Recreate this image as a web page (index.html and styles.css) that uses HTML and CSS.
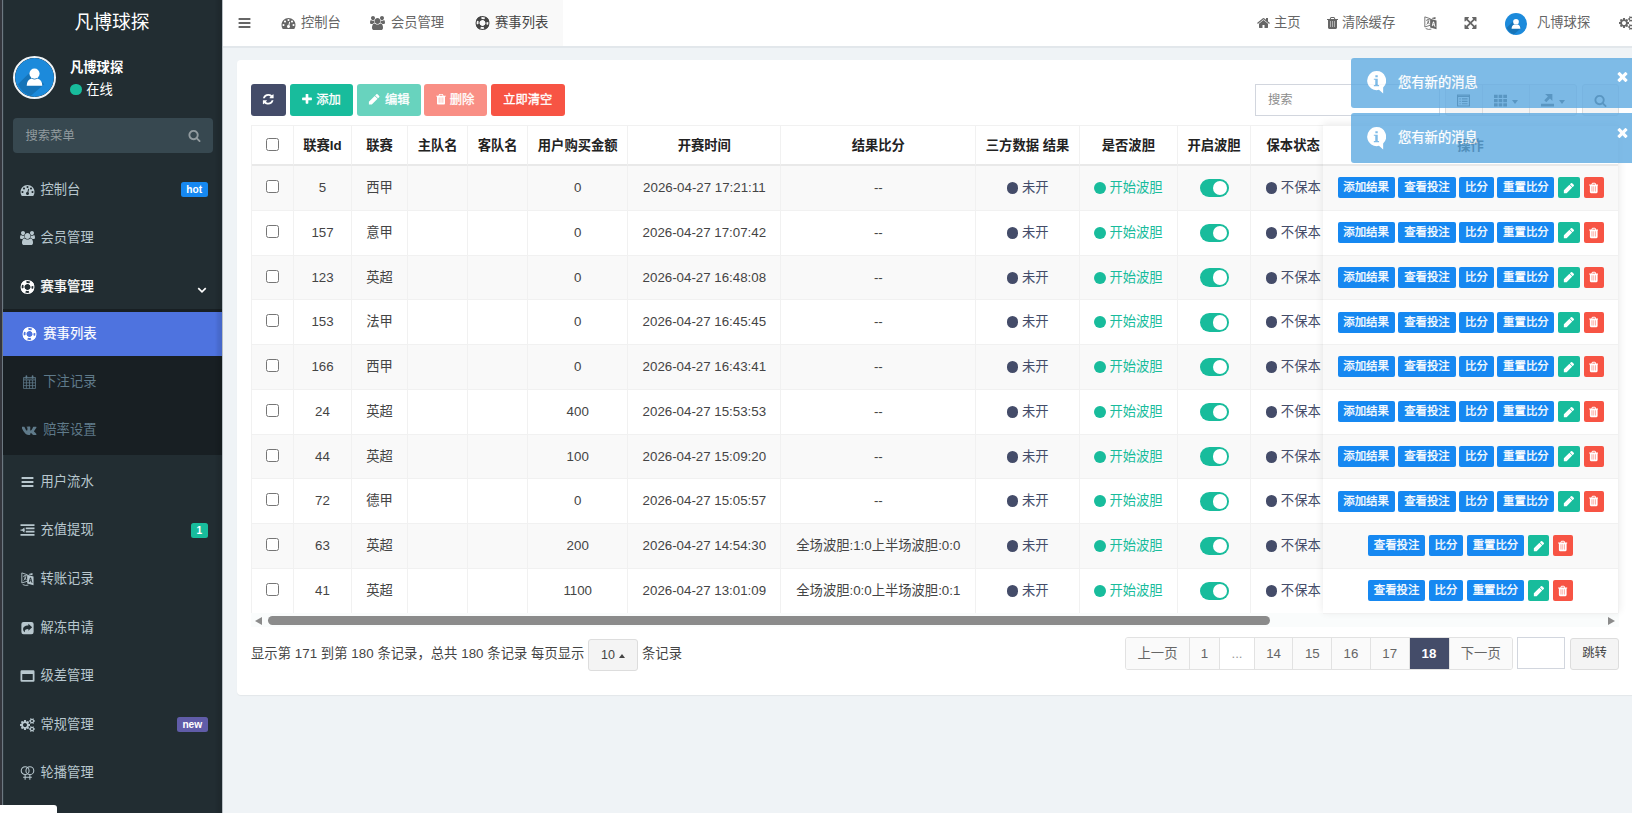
FILE: index.html
```html
<!DOCTYPE html>
<html lang="zh-CN">
<head>
<meta charset="utf-8">
<title>赛事列表</title>
<link rel="stylesheet" href="styles.css">
</head>
<body>
<svg class="sprite" aria-hidden="true">
  <symbol id="bars" viewBox="0 0 1792 1792"><path d="M1664 1344v128q0 26-19 45t-45 19h-1408q-26 0-45-19t-19-45v-128q0-26 19-45t45-19h1408q26 0 45 19t19 45zm0-512v128q0 26-19 45t-45 19h-1408q-26 0-45-19t-19-45v-128q0-26 19-45t45-19h1408q26 0 45 19t19 45zm0-512v128q0 26-19 45t-45 19h-1408q-26 0-45-19t-19-45v-128q0-26 19-45t45-19h1408q26 0 45 19t19 45z"/></symbol>
  <symbol id="pencil" viewBox="0 0 1792 1792"><path d="M960 416l416 416-832 832h-416v-416zm683 96q0 53-37 90l-166 166-416-416 166-165q36-38 90-38 53 0 91 38l235 234q37 39 37 91z"/></symbol>
  <symbol id="trash" viewBox="192 0 1408 1792"><path opacity=".5" d="M540 600h712v840H540z"/><path d="M704 1376v-704q0-14-9-23t-23-9h-64q-14 0-23 9t-9 23v704q0 14 9 23t23 9h64q14 0 23-9t9-23zm256 0v-704q0-14-9-23t-23-9h-64q-14 0-23 9t-9 23v704q0 14 9 23t23 9h64q14 0 23-9t9-23zm256 0v-704q0-14-9-23t-23-9h-64q-14 0-23 9t-9 23v704q0 14 9 23t23 9h64q14 0 23-9t9-23zm-544-992h448l-48-117q-7-9-17-11h-317q-10 2-17 11zm928 32v64q0 14-9 23t-23 9h-96v948q0 83-47 143.5t-113 60.5h-832q-66 0-113-58.5t-47-141.5v-952h-96q-14 0-23-9t-9-23v-64q0-14 9-23t23-9h309l70-167q15-37 54-63t79-26h320q40 0 79 26t54 63l70 167h309q14 0 23 9t9 23z"/></symbol>
  <symbol id="search" viewBox="0 0 1792 1792"><path d="M1216 832q0-185-131.5-316.5t-316.5-131.5-316.5 131.5-131.5 316.5 131.5 316.5 316.5 131.5 316.5-131.5 131.5-316.5zm512 832q0 52-38 90t-90 38q-54 0-90-38l-343-342q-179 124-399 124-143 0-273.5-55.5t-225-150-150-225-55.5-273.5 55.5-273.5 150-225 225-150 273.5-55.5 273.5 55.5 225 150 150 225 55.5 273.5q0 220-124 399l343 343q37 37 37 90z"/></symbol>
  <symbol id="plus" viewBox="192 0 1408 1792"><path d="M1600 736v192q0 40-28 68t-68 28h-416v416q0 40-28 68t-68 28h-192q-40 0-68-28t-28-68v-416h-416q-40 0-68-28t-28-68v-192q0-40 28-68t68-28h416v-416q0-40 28-68t68-28h192q40 0 68 28t28 68v416h416q40 0 68 28t28 68z"/></symbol>
  <symbol id="refresh" viewBox="0 0 1792 1792"><path d="M1639 1056q0 5-1 7-64 268-268 434.5t-478 166.5q-146 0-282.5-55t-243.5-157l-129 129q-19 19-45 19t-45-19-19-45v-448q0-26 19-45t45-19h448q26 0 45 19t19 45-19 45l-137 137q71 66 161 102t187 36q134 0 250-65t186-179q11-17 53-117 8-23 30-23h192q13 0 22.5 9.5t9.5 22.5zm25-800v448q0 26-19 45t-45 19h-448q-26 0-45-19t-19-45 19-45l138-138q-148-137-349-137-134 0-250 65t-186 179q-11 17-53 117-8 23-30 23h-199q-13 0-22.5-9.5t-9.5-22.5v-7q65-268 270-434.5t480-166.5q146 0 284 55.5t245 156.5l130-129q19-19 45-19t45 19 19 45z"/></symbol>
  <symbol id="home" viewBox="0 0 1792 1792"><path d="M1472 992v480q0 26-19 45t-45 19h-384v-384h-256v384h-384q-26 0-45-19t-19-45v-480q0-1 .5-3t.5-3l575-474 575 474q1 2 1 6zm223-69l-62 74q-8 9-21 11h-3q-13 0-21-7l-692-577-692 577q-12 8-24 7-13-2-21-11l-62-74q-8-10-7-23.5t11-21.5l719-599q32-26 76-26t76 26l244 204v-195q0-14 9-23t23-9h192q14 0 23 9t9 23v408l219 182q10 8 11 21.5t-7 23.5z"/></symbol>
  <symbol id="times" viewBox="192 0 1408 1792"><path d="M1490 1322q0 40-28 68l-136 136q-28 28-68 28t-68-28l-294-294-294 294q-28 28-68 28t-68-28l-136-136q-28-28-28-68t28-68l294-294-294-294q-28-28-28-68t28-68l136-136q28-28 68-28t68 28l294 294 294-294q28-28 68-28t68 28l136 136q28 28 28 68t-28 68l-294 294 294 294q28 28 28 68z"/></symbol>
  <symbol id="expand" viewBox="0 0 1792 1792"><path d="M1411 541l-355 355 355 355 144-144q29-31 70-14 39 17 39 59v448q0 26-19 45t-45 19h-448q-42 0-59-40-17-39 14-69l144-144-355-355-355 355 144 144q31 30 14 69-17 40-59 40h-448q-26 0-45-19t-19-45v-448q0-42 40-59 39-17 69 14l144 144 355-355-355-355-144 144q-19 19-45 19-12 0-24-5-40-17-40-59v-448q0-26 19-45t45-19h448q42 0 59 40 17 39-14 69l-144 144 355 355 355-355-144-144q-31-30-14-69 17-40 59-40h448q26 0 45 19t19 45v448q0 42-39 59-13 5-25 5-26 0-45-19z"/></symbol>
  <symbol id="users" viewBox="64 0 1920 1792"><path d="M657 896q-162 5-265 128h-134q-82 0-138-40.5t-56-118.5q0-353 124-353 6 0 43.5 21t97.5 42.5 119 21.5q67 0 133-23-5 37-5 66 0 139 81 256zm1071 637q0 120-73 189.5t-194 69.5h-874q-121 0-194-69.5t-73-189.5q0-53 3.5-103.5t14-109 26.5-108.5 43-97.5 62-81 85.5-53.5 111.5-20q10 0 43 21.5t73 48 107 48 135 21.5 135-21.5 107-48 73-48 43-21.5q61 0 111.5 20t85.5 53.5 62 81 43 97.5 26.5 108.5 14 109 3.5 103.5zm-1024-1277q0 106-75 181t-181 75-181-75-75-181 75-181 181-75 181 75 75 181zm704 384q0 159-112.5 271.5t-271.5 112.5-271.5-112.5-112.5-271.5 112.5-271.5 271.5-112.5 271.5 112.5 112.5 271.5zm576 225q0 78-56 118.5t-138 40.5h-134q-103-123-265-128 81-117 81-256 0-29-5-66 66 23 133 23 59 0 119-21.5t97.5-42.5 43.5-21q124 0 124 353zm-128-609q0 106-75 181t-181 75-181-75-75-181 75-181 181-75 181 75 75 181z"/></symbol>
  <symbol id="dash" viewBox="0 0 1792 1792"><path d="M384 1152q0-53-37.5-90.5t-90.5-37.5-90.5 37.5-37.5 90.5 37.5 90.5 90.5 37.5 90.5-37.5 37.5-90.5zm192-448q0-53-37.5-90.5t-90.5-37.5-90.5 37.5-37.5 90.5 37.5 90.5 90.5 37.5 90.5-37.5 37.5-90.5zm428 481l101-382q6-26-7.5-48.5t-38.5-29.5-48 6.5-30 39.5l-101 382q-60 5-107 43.5t-63 98.5q-20 77 20 146t117 89 146-20 89-117q16-60-6-117t-72-91zm660-33q0-53-37.5-90.5t-90.5-37.5-90.5 37.5-37.5 90.5 37.5 90.5 90.5 37.5 90.5-37.5 37.5-90.5zm-640-640q0-53-37.5-90.5t-90.5-37.5-90.5 37.5-37.5 90.5 37.5 90.5 90.5 37.5 90.5-37.5 37.5-90.5zm448 192q0-53-37.5-90.5t-90.5-37.5-90.5 37.5-37.5 90.5 37.5 90.5 90.5 37.5 90.5-37.5 37.5-90.5zm320 448q0 261-141 483-19 29-54 29h-1402q-35 0-54-29-141-221-141-483 0-182 71-348t191-286 286-191 348-71 348 71 286 191 191 286 71 348z"/></symbol>
  <symbol id="cogs" viewBox="0 0 1920 1792"><path d="M896 896q0-106-75-181t-181-75-181 75-75 181 75 181 181 75 181-75 75-181zm768 512q0-52-38-90t-90-38-90 38-38 90q0 53 37.5 90.5t90.5 37.5 90.5-37.5 37.5-90.5zm0-1024q0-52-38-90t-90-38-90 38-38 90q0 53 37.5 90.5t90.5 37.5 90.5-37.5 37.5-90.5zm-384 421v185q0 10-7 19.5t-16 10.5l-155 24q-11 35-32 76 34 48 90 115 7 11 7 20 0 12-7 19-23 30-82.5 89.5t-78.5 59.5q-11 0-21-7l-115-90q-37 19-77 31-11 108-23 155-7 24-30 24h-186q-11 0-20-7.5t-10-17.5l-23-153q-34-10-75-31l-118 89q-7 7-20 7-11 0-21-8-144-133-144-160 0-9 7-19 10-14 41-53t47-61q-23-44-35-82l-152-24q-10-1-17-9.5t-7-19.5v-185q0-10 7-19.5t16-10.5l155-24q11-35 32-76-34-48-90-115-7-11-7-20 0-12 7-20 22-30 82-89t79-59q11 0 21 7l115 90q34-18 77-32 11-108 23-154 7-24 30-24h186q11 0 20 7.5t10 17.5l23 153q34 10 75 31l118-89q8-7 20-7 11 0 21 8 144 133 144 160 0 8-7 19-12 16-42 54t-45 60q23 48 34 82l152 23q10 2 17 10.5t7 19.5zm640 533v140q0 16-149 31-12 27-30 52 51 113 51 138 0 4-4 7-122 71-124 71-8 0-46-47t-52-68q-20 2-30 2t-30-2q-14 21-52 68t-46 47q-2 0-124-71-4-3-4-7 0-25 51-138-18-25-30-52-149-15-149-31v-140q0-16 149-31 13-29 30-52-51-113-51-138 0-4 4-7 4-2 35-20t59-34 30-16q8 0 46 46.5t52 67.5q20-2 30-2t30 2q51-71 92-112l6-2q4 0 124 70 4 3 4 7 0 25-51 138 17 23 30 52 149 15 149 31zm0-1024v140q0 16-149 31-12 27-30 52 51 113 51 138 0 4-4 7-122 71-124 71-8 0-46-47t-52-68q-20 2-30 2t-30-2q-14 21-52 68t-46 47q-2 0-124-71-4-3-4-7 0-25 51-138-18-25-30-52-149-15-149-31v-140q0-16 149-31 13-29 30-52-51-113-51-138 0-4 4-7 4-2 35-20t59-34 30-16q8 0 46 46.5t52 67.5q20-2 30-2t30 2q51-71 92-112l6-2q4 0 124 70 4 3 4 7 0 25-51 138 17 23 30 52 149 15 149 31z"/></symbol>
  <symbol id="vk" viewBox="0 0 1920 1792"><path d="M1853 520q23 64-150 294-24 32-65 85-78 100-90 131-17 41 14 81 17 21 81 82h1l1 1 1 1 2 2q141 131 191 221 3 5 6.500 12.500t7 26.500-.5 34-25 27.500-59 12.500l-256 4q-24 5-56-5t-52-22l-20-12q-30-21-70-64t-68.500-77.500-61-58-56.500-15.500q-3 1-8 3.500t-17 14.500-21.500 29.500-17 52-6.500 77.500q0 15-3.500 27.500t-7.500 18.500l-4 5q-18 19-53 22h-115q-71 4-146-16.500t-131.500-53-103-66-70.500-57.500l-25-24q-10-10-27.500-30t-71.500-91-106-151-122.500-211-130.500-272q-6-16-6-27t3-16l4-6q15-19 57-19l274-2q12 2 23 6.500t16 8.500l5 3q16 11 24 32 20 50 46 103.500t41 81.500l16 29q29 60 56 104t48.500 68.500 41.500 38.500 34 14 27-5q2-1 5-5t12-22 13.500-47 9.500-81 0-125q-2-40-9-73t-14-46l-6-12q-25-34-85-43-13-2 5-24 16-19 38-30 53-26 239-24 82 1 135 13 20 5 33.500 13.500t20.500 24 10.500 32 3.500 45.500-1 55-2.500 70.500-1.500 82.500q0 11-1 42t-.5 48 3.500 40.500 11.500 39 22.500 24.500q8 2 17 4t26-11 38-34.500 52-67 68-107.500q60-104 107-225 4-10 10-17.500t11-10.500l4-3 5-2.500 13-3 20-.5 288-2q39-5 64 2.500t31 16.500z"/></symbol>
  <symbol id="ring" viewBox="0 0 1792 1792"><g fill="none" stroke="currentColor"><circle cx="896" cy="896" r="825" stroke-width="140"/><circle cx="896" cy="896" r="455" stroke-width="130"/><circle cx="896" cy="896" r="640" stroke-width="500" stroke-dasharray="558 447.300" stroke-dashoffset="-223"/></g></symbol>
  <symbol id="calendar" viewBox="0 0 1792 1792"><path fill="none" stroke="currentColor" stroke-width="100" d="M130 320h1532v1400H130zM130 640h1532M130 1000h1532M130 1360h1532M500 640v1080M896 640v1080M1290 640v1080"/><path d="M130 320h1532v300H130z" opacity=".35"/><path fill="none" stroke="currentColor" stroke-width="210" stroke-linecap="round" d="M500 130v260M1290 130v260"/></symbol>
  <symbol id="lang" viewBox="0 0 16 16"><path fill="none" stroke="currentColor" stroke-width="1" d="M8 3.200 1.500 1v11.500L8 10.500M3 5l4-1M5 3.500v1M3.500 9.500Q6 8 6.200 5M4 6.500 7 9M2.500 14.300q3 1.700 6.500.7"/><path fill-rule="evenodd" d="M7.600 3 14.900 5v10.200L7.600 13zM10.900 6.200 9.400 11.400l1 .3.4-1.300 1.500.4.400 1.400 1 .3-1.600-5.800zm.6 1.500.5 2-1-.3zM9.500 2.300l4.200-1.300v2.700l-4.200-.9z"/></symbol>
  <symbol id="outdent" viewBox="0 0 16 16"><path d="M0 1.500h16v2H0zM6 5.200h10v2H6zM6 8.900h10v2H6zM0 12.600h16v2H0zM4.500 5v6L1 8zM0 7.300h5v1.500H0z"/></symbol>
  <symbol id="share" viewBox="0 0 16 16"><path fill-rule="evenodd" d="M3.500 1h9A2.500 2.500 0 0 1 15 3.500v9a2.500 2.500 0 0 1-2.500 2.500h-9A2.500 2.500 0 0 1 1 12.500v-9A2.500 2.500 0 0 1 3.500 1zM9 3v2C4.500 5 3 7 3 9.300c0 1.500.8 2.700 2 3.500C4.500 9.800 5.800 9 9 9v2l4.300-4z"/></symbol>
  <symbol id="window" viewBox="0 0 16 16"><path fill-rule="evenodd" d="M1.300 1.500h13.400q1.300 0 1.300 1.300v10.600q0 1.300-1.300 1.300H1.300Q0 14.700 0 13.400V2.800q0-1.300 1.300-1.300zM2 5.800v6.800h12V5.800z"/></symbol>
  <symbol id="venus" viewBox="0 0 16 16"><g fill="none" stroke="currentColor" stroke-width="1.200"><circle cx="5.300" cy="5.300" r="4.500"/><circle cx="10.700" cy="5.300" r="4.500"/><path d="M5.300 9.800v6M10.700 9.800v6M3 12.900h10"/></g></symbol>
  <symbol id="down" viewBox="0 0 16 16"><path fill="none" stroke="currentColor" stroke-width="2.200" d="m3 5.500 5 5 5-5"/></symbol>
  <symbol id="listalt" viewBox="0 0 16 16"><path fill="none" stroke="currentColor" stroke-width="1.400" d="M.7 1.200h14.600v13.600H.7zM.7 3h14.600M3 6h1.500M6 6h7M3 9h1.500M6 9h7M3 12h1.500M6 12h7"/></symbol>
  <symbol id="th" viewBox="0 0 16 16"><path d="M0 1h4.500v4H0zM5.700 1h4.500v4H5.700zM11.400 1H16v4h-4.600zM0 6.200h4.500v4H0zM5.700 6.200h4.500v4H5.700zM11.400 6.200H16v4h-4.600zM0 11.400h4.500v4H0zM5.700 11.400h4.500v4H5.700zM11.400 11.400H16v4h-4.600z"/></symbol>
  <symbol id="export" viewBox="0 0 16 16"><path d="M0 12h16v3.500H0zM5 0h9v8.500l-3-3L6.500 10 4 7.600 8.500 3z"/></symbol>
  <symbol id="info" viewBox="0 0 20 24"><path fill-rule="evenodd" d="M10 0a10 10 0 0 1 7 17.200V23.500L12.600 19.700A10 10 0 1 1 10 0zM8.800 4.300v2.300h2.500V4.300zM7.200 8v1.200h1.500v5.500H7.200V16h5.500v-1.300h-1.400V8z"/></symbol>
  <symbol id="person" viewBox="0 0 40 40"><circle cx="20" cy="20" r="20" fill="#1c8adb"/><path fill="#1674b8" d="M16 14 3 27q4 9 13 12l14-12z"/><circle cx="20" cy="16" r="5.200" fill="#fff"/><path fill="#fff" d="M12 28.500q0-6 5-7.500 3 2 6 0 5 1.500 5 7.500z"/></symbol>
</svg>

<div class="app">
  <aside class="sidebar">
    <div class="logo">凡博球探</div>
    <div class="profile">
      <svg class="avatar"><use href="#person"/></svg>
      <div class="who"><b>凡博球探</b><span><i class="dot green"></i>在线</span></div>
    </div>
    <div class="menu-search"><span>搜索菜单</span><svg class="ic"><use href="#search"/></svg></div>
    <nav class="menu">
      <a><svg class="ic"><use href="#dash"/></svg>控制台<em class="badge blue">hot</em></a>
      <a><svg class="ic"><use href="#users"/></svg>会员管理</a>
      <a class="open"><svg class="ic"><use href="#ring"/></svg>赛事管理<svg class="ic arrow"><use href="#down"/></svg></a>
      <div class="submenu">
        <a class="on"><svg class="ic"><use href="#ring"/></svg>赛事列表</a>
        <a><svg class="ic"><use href="#calendar"/></svg>下注记录</a>
        <a><svg class="ic"><use href="#vk"/></svg>赔率设置</a>
      </div>
      <a><svg class="ic"><use href="#bars"/></svg>用户流水</a>
      <a><svg class="ic"><use href="#outdent"/></svg>充值提现<em class="badge teal">1</em></a>
      <a><svg class="ic"><use href="#lang"/></svg>转账记录</a>
      <a><svg class="ic"><use href="#share"/></svg>解冻申请</a>
      <a><svg class="ic"><use href="#window"/></svg>级差管理</a>
      <a><svg class="ic"><use href="#cogs"/></svg>常规管理<em class="badge purple">new</em></a>
      <a><svg class="ic"><use href="#venus"/></svg>轮播管理</a>
    </nav>
  </aside>

  <div class="main">
    <header class="topbar">
      <a class="toggle"><svg class="ic"><use href="#bars"/></svg></a>
      <a class="tab"><svg class="ic"><use href="#dash"/></svg>控制台</a>
      <a class="tab"><svg class="ic"><use href="#users"/></svg>会员管理</a>
      <a class="tab current"><svg class="ic"><use href="#ring"/></svg>赛事列表</a>
      <div class="tools">
        <a class="t-home"><svg class="ic"><use href="#home"/></svg>主页</a>
        <a class="t-clear"><svg class="ic narrow"><use href="#trash"/></svg>清除缓存</a>
        <a class="t-lang"><svg class="ic"><use href="#lang"/></svg></a>
        <a class="t-full"><svg class="ic"><use href="#expand"/></svg></a>
        <a class="t-user"><svg class="face"><use href="#person"/></svg>凡博球探</a>
        <a><svg class="ic"><use href="#cogs"/></svg></a>
      </div>
    </header>

    <section class="card">
      <div class="toolbar">
        <button class="btn navy"><svg class="ic"><use href="#refresh"/></svg></button>
        <button class="btn teal"><svg class="ic narrow"><use href="#plus"/></svg>添加</button>
        <button class="btn teal faded"><svg class="ic"><use href="#pencil"/></svg>编辑</button>
        <button class="btn red faded del"><svg class="ic narrow"><use href="#trash"/></svg>删除</button>
        <button class="btn red wipe">立即清空</button>
        <div class="search-box">搜索</div>
        <div class="group">
          <span><svg class="ic"><use href="#listalt"/></svg></span>
          <span><svg class="ic"><use href="#th"/></svg><i class="caret"></i></span>
          <span><svg class="ic"><use href="#export"/></svg><i class="caret"></i></span>
        </div>
        <div class="group find"><span><svg class="ic"><use href="#search"/></svg></span></div>
      </div>

      <div class="grid-wrap">
        <div class="scroll-part" id="rows">
          <div class="row head">
            <span><input type="checkbox"></span><span>联赛Id</span><span>联赛</span><span>主队名</span><span>客队名</span><span>用户购买金额</span><span>开赛时间</span><span>结果比分</span><span>三方数据 结果</span><span>是否波胆</span><span>开启波胆</span><span>保本状态</span>
          </div>
        </div>
        <div class="fixed-part" id="ops"><div class="op head">操作</div></div>
      </div>
      <div class="hscroll"><i class="left"></i><b></b><i class="right"></i></div>

      <footer class="pager">
        <span class="summary">显示第 171 到第 180 条记录，总共 180 条记录 每页显示</span>
        <button class="size">10<i class="caret up"></i></button>
        <span class="summary">条记录</span>
        <div class="pages"><a class="prev">上一页</a><a class="w30">1</a><a class="gap">...</a><a>14</a><a>15</a><a>16</a><a>17</a><a class="cur">18</a><a class="next">下一页</a></div>
        <div class="jump-input"></div>
        <button class="jump">跳转</button>
      </footer>
    </section>
  </div>

  <div class="toasts">
    <div class="toast"><svg class="bubble"><use href="#info"/></svg>您有新的消息<svg class="close"><use href="#times"/></svg></div>
    <div class="toast"><svg class="bubble"><use href="#info"/></svg>您有新的消息<svg class="close"><use href="#times"/></svg></div>
  </div>
  <div class="status-tip"></div>
</div>
<script src="table.js"></script>
</body>
</html>
```
FILE: styles.css
```css
* { box-sizing: border-box; }
body { margin: 0; width: 1632px; height: 813px; overflow: hidden; background: #eff3f6; color: #444; font: 13.3px/18px "Liberation Sans", "Noto Sans CJK SC", sans-serif; }
button, input { font: inherit; }
.sprite { position: absolute; width: 0; height: 0; }
.app { position: relative; display: flex; width: 1649px; height: 813px; }
.ic { flex: none; width: 15px; height: 14px; fill: currentColor; }
.ic.narrow { width: 11px; }

/* Sidebar */
.sidebar { flex: none; width: 223px; height: 813px; background: #222d32; border-left: 3px solid #6d7881; border-right: 1px solid #b9c0c5; box-shadow: inset -8px 0 3px -3px rgba(0,0,0,.09), inset 1px 0 0 #2b373d; color: #b8c7ce; position: relative; }
.sidebar::before { content: ""; position: absolute; left: -3px; top: 0; width: 2px; height: 100%; background: #34363d; }
.logo { height: 46px; padding-right: 1px; line-height: 45px; text-align: center; font-size: 18.8px; color: #fff; }
.profile { display: flex; height: 62px; padding: 10px 0 0 9.500px; gap: 14.500px; }
.avatar { width: 43px; height: 43px; border: 2px solid #f0f4f7; border-radius: 50%; }
.who { display: flex; flex-direction: column; gap: 4px; padding-top: 2.500px; color: #fff; }
.who span { display: flex; align-items: center; gap: 4.500px; }
.dot { flex: none; display: inline-block; width: 11.800px; height: 11.800px; border-radius: 50%; background: #444c69; }
.dot.green { background: #18bc9c; }
.menu-search { display: flex; align-items: center; justify-content: space-between; width: 200px; height: 35px; margin: 10px 0 12px 9.500px; padding: 0 12px 0 13px; border-radius: 4px; background: #374850; color: #929b9f; font-size: 12.3px; }
.menu-search .ic { height: 13px; width: 13px; }
.menu a { display: flex; align-items: center; height: 48.600px; padding: 1px 14px 0 16.500px; gap: 6px; }
.menu .open { color: #fff; -webkit-text-stroke: .25px currentColor; }
.submenu { height: 146.200px; margin: -1.800px 0 1.900px; padding-top: 3px; background: #181f23; box-shadow: inset -8px 0 3px -3px rgba(0,0,0,.09); }
.submenu a { height: 44px; margin-bottom: 3.700px; padding-left: 19.300px; color: #5f7a8a; }
.submenu a.on { background: #4e73df; color: #fff; box-shadow: inset -8px 0 3px -3px rgba(0,0,0,.09); -webkit-text-stroke: .15px currentColor; }
.arrow { width: 12px; height: 12px; margin: 6px 0 0 auto; }
.badge { margin-left: auto; height: 15.300px; padding: 0 5.800px; border-radius: 2.500px; font: bold 10.200px/15px "Liberation Sans", sans-serif; color: #fff; }
.badge.blue { background: #1688f1; }
.badge.purple { background: #605ca8; }
.teal { background: #18bc9c; }

/* Top bar */
.main { flex: 1; min-width: 0; }
.topbar { display: flex; height: 48px; background: #fff; border-bottom: 2px solid #e2e7eb; color: #666; }
.topbar a { display: flex; align-items: center; height: 46px; padding-bottom: 1px; gap: 5.500px; }
.topbar .toggle { width: 43.500px; padding-left: 13.500px; }
.topbar .tab { padding-left: 14px; padding-right: 15.500px; }
.topbar .tab.current { padding-left: 15px; padding-right: 15px; background: #f9f9f9; color: #444; }
.tools { display: flex; width: 393px; margin-left: auto; }
.tools a { gap: 3px; }
.tools .t-home { width: 71px; }
.tools .t-clear { width: 96px; gap: 4px; }
.tools .t-lang { width: 39.500px; }
.tools .t-full { width: 42px; }
.tools .t-user { width: 114px; gap: 10.500px; }
.face { width: 22px; height: 22px; margin-top: 3px; }

/* Card */
.card { height: 634.500px; margin: 12px 0 0 14px; padding: 24px 30px 0 14px; border-radius: 4px; background: #fff; box-shadow: 0 1px 1px rgba(0,0,0,.05); }
.toolbar { display: flex; height: 32px; margin-bottom: 9px; }
.btn { display: flex; align-items: center; justify-content: center; gap: 4px; height: 32px; width: 63px; margin-right: 4px; padding: 0 0 1px; border: 0; border-radius: 3px; color: #fff; font-size: 12.300px; -webkit-text-stroke: .3px #fff; }
.btn .ic { height: 12.500px; width: 12.500px; stroke: none; }
.btn .narrow { width: 10px; }
.navy { width: 35px; background: #444c69; }
.red { background: #f75444; }
.faded { opacity: .65; width: 64px; }
.btn.del { margin-left: -1.500px; width: 63px; }
.wipe { width: 74.500px; }
.search-box { width: 185px; margin-left: auto; padding: 0 12px; border: 1px solid #d2d6de; font-size: 12.300px; line-height: 30px; color: #8d8d8d; }
.group { display: flex; margin-left: 5px; border: 1px solid #ddd; border-radius: 3px; background: #f4f4f4; color: #444; }
.group span { display: flex; align-items: center; justify-content: center; gap: 5px; width: 35.500px; }
.group span + span { width: 47px; border-left: 1px solid #ddd; }
.group .ic { width: 13px; height: 13px; }
.caret { border: 3.300px solid transparent; border-top: 4px solid currentColor; border-bottom: 0; margin-top: 3px; }
.caret.up { border-top: 0; border-bottom: 4px solid currentColor; margin-top: 2px; }

/* Table */
.grid-wrap { display: flex; height: 488px; }
.scroll-part { width: 1072.300px; overflow: hidden; border-top: 1px solid #f1f1f1; border-left: 1px solid #f1f1f1; }
.row { display: grid; width: 1100px; height: 44.750px; grid-template-columns: 42px 58px 56.200px 60px 60px 100px 153.300px 194.700px 103.800px 97.800px 73.500px 100px; }
.row > span { display: flex; align-items: center; justify-content: center; gap: 3.500px; padding-top: .5px; border-right: 1px solid #f1f1f1; border-bottom: 1px solid #f1f1f1; white-space: nowrap; }
.row > span:last-child { justify-content: flex-start; padding-left: 14.300px; }
.row.head > span:last-child { padding-left: 15.300px; }
.row input { width: 13px; height: 13px; margin: 0 1px 3px 0; }
.row.head, .op.head { height: 40px; font-weight: bold; color: #222; }
.row.head > span, .op.head { border-bottom: 2px solid #e9e9e9; padding-top: 1px; }
.row:nth-child(even), .op:nth-child(even) { background: #f9f9f9; }
.navy-text { color: #444c69; }
.green-text { color: #18bc9c; }
.switch { width: 29px; height: 18.500px; margin-left: 1px; border-radius: 10px; background: #18bc9c; }
.switch::after { content: ""; display: block; width: 14.700px; height: 14.700px; margin: 1.900px 0 0 12.600px; border-radius: 50%; background: #fff; }
.fixed-part { position: relative; width: 296px; border: 1px solid #f1f1f1; border-bottom: 0; border-left: 0; background: #fff; box-shadow: 0 -1px 8px rgba(0,0,0,.09); }
.op { display: flex; align-items: center; justify-content: center; gap: 3.700px; height: 44.750px; border-bottom: 1px solid #f1f1f1; }
.op b { display: flex; align-items: center; justify-content: center; height: 21px; padding: 0 5.800px; border-radius: 2px; background: #1688f1; color: #fff; font-size: 11.400px; font-weight: 400; -webkit-text-stroke: .3px #fff; line-height: 21px; }
.op b.edit { width: 21.700px; background: #18bc9c; }
.op b.remove { width: 20px; background: #f75444; }
.op .ic { width: 12px; height: 12px; stroke: none; }
.op .narrow { width: 9.500px; }
.hscroll { display: flex; align-items: center; height: 14px; padding: 1px 4px 0; background: #fafcfc; }
.hscroll b { width: 1002px; height: 9px; margin: 0 auto 0 6px; border-radius: 5px; background: #8b8b8b; }
.hscroll i { border: 4.500px solid transparent; }
.hscroll .left { border-left: 0; border-right: 7px solid #8b8b8b; }
.hscroll .right { border-right: 0; border-left: 7px solid #8b8b8b; }

/* Pager */
.pager { display: flex; height: 33px; margin-top: 10px; line-height: 32px; }
.summary { padding-top: 1px; letter-spacing: .05px; }
.size, .jump { height: 31.500px; padding: 0; border: 1px solid #ddd; border-radius: 3px; background: #f4f4f4; color: #444; }
.size { display: flex; align-items: center; justify-content: center; gap: 4px; width: 50px; margin: 2px 4px 0 3.500px; font-size: 12.500px; }
.pages { display: flex; margin-left: auto; border: 1px solid #e2e2e2; border-radius: 3px; color: #666; overflow: hidden; }
.pages a { width: 38.700px; border-left: 1px solid #e2e2e2; background: #fafafa; text-align: center; line-height: 31px; }
.pages a:first-child { border-left: 0; }
.pages .prev { width: 62.500px; }
.pages .next { width: 63.500px; }
.pages .w30 { width: 30.500px; }
.pages .gap { width: 34.500px; background: #fff; color: #999; }
.pages .cur { width: 40px; margin: -1px 0; background: #444c69; color: #fff; font-weight: bold; line-height: 33px; }
.jump-input { width: 48px; height: 32px; margin: 0 5px 0 4px; border: 1px solid #d2d6de; background: #fff; }
.jump { width: 49px; margin-top: 1px; font-size: 12.300px; line-height: 29px; }

/* Overlays */
.toasts { position: absolute; left: 1350.500px; top: 57.500px; width: 300px; display: flex; flex-direction: column; gap: 5.500px; }
.toast { display: flex; align-items: center; height: 50px; padding-left: 16.500px; border-radius: 3px; background: #5fabe2; opacity: .8; color: #fff; -webkit-text-stroke: .25px #fff; }
.bubble { width: 19px; height: 23px; margin-right: 12px; fill: #fff; stroke: none; }
.close { width: 13px; height: 15px; margin: -12px 0 0 138px; fill: #fff; stroke: none; }
.status-tip { position: absolute; left: 0; bottom: 0; width: 57px; height: 8px; border-top-right-radius: 3px; background: #fff; }
```
FILE: table.js
```javascript
const matches = [
  [5, '西甲', 0, '17:21:11'],
  [157, '意甲', 0, '17:07:42'],
  [123, '英超', 0, '16:48:08'],
  [153, '法甲', 0, '16:45:45'],
  [166, '西甲', 0, '16:43:41'],
  [24, '英超', 400, '15:53:53'],
  [44, '英超', 100, '15:09:20'],
  [72, '德甲', 0, '15:05:57'],
  [63, '英超', 200, '14:54:30', '全场波胆:1:0上半场波胆:0:0'],
  [41, '英超', 1100, '13:01:09', '全场波胆:0:0上半场波胆:0:1']
];

const rows = document.getElementById('rows');
const ops = document.getElementById('ops');

for (const [id, league, amount, time, score] of matches) {
  rows.insertAdjacentHTML('beforeend', `<div class="row">
    <span><input type="checkbox"></span><span>${id}</span><span>${league}</span><span></span><span></span>
    <span>${amount}</span><span>2026-04-27 ${time}</span><span>${score || '--'}</span>
    <span class="navy-text"><i class="dot"></i>未开</span>
    <span class="green-text"><i class="dot green"></i>开始波胆</span>
    <span><i class="switch"></i></span>
    <span class="navy-text"><i class="dot"></i>不保本</span>
  </div>`);
  ops.insertAdjacentHTML('beforeend', `<div class="op">
    ${score ? '' : '<b>添加结果</b>'}<b>查看投注</b><b>比分</b><b>重置比分</b>
    <b class="edit"><svg class="ic"><use href="#pencil"/></svg></b>
    <b class="remove"><svg class="ic narrow"><use href="#trash"/></svg></b>
  </div>`);
}
```
